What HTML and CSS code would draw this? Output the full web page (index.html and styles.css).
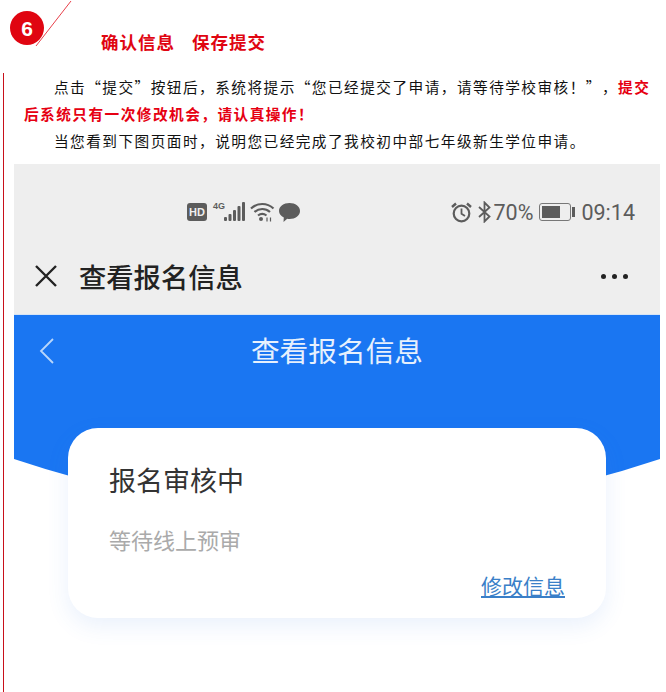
FILE: index.html
```html
<!DOCTYPE html>
<html lang="zh-CN">
<head>
    <meta charset="UTF-8">
    <meta name="viewport" content="width=device-width, initial-scale=1.0">
    <title>确认信息 保存提交</title>
    <link rel="stylesheet" href="styles.css">
</head>
<body>
    <header class="step-head">
        <div class="step-num">6</div>
        <svg class="step-slash" width="80" height="50" viewBox="0 0 80 50"><path d="M71 1 36 46" stroke="#e8404a" stroke-width="1" fill="none"/></svg>
        <h2 class="step-title">确认信息<span class="step-title-2">保存提交</span></h2>
    </header>

    <section class="step-body">
        <p class="para">点击“提交”按钮后，系统将提示“您已经提交了申请，请等待学校审核！”，<strong>提交后系统只有一次修改机会，请认真操作！</strong></p>
        <p class="para">当您看到下图页面时，说明您已经完成了我校初中部七年级新生学位申请。</p>

        <div class="phone">
            <div class="status-bar">
                <div class="status-group">
                    <span class="hd-badge">HD</span>
                    <span class="net-label">4G</span>
                    <svg class="signal" width="21" height="20" viewBox="0 0 21 20" fill="#5c5c5c">
                        <rect x="0" y="15" width="3" height="4" rx="1"/>
                        <rect x="4.5" y="12" width="3" height="7" rx="1"/>
                        <rect x="9" y="8" width="3" height="11" rx="1"/>
                        <rect x="13.5" y="4" width="3" height="15" rx="1"/>
                        <rect x="18" y="0" width="3" height="19" rx="1"/>
                    </svg>
                    <svg class="wifi" width="25" height="20" viewBox="0 0 25 20" fill="none" stroke="#5c5c5c" stroke-width="2.200">
                        <path d="M1 6.500C7.500 .5 17 .5 23.500 6.500"/>
                        <path d="M4.500 10C9 6 15.500 6 20 10"/>
                        <path d="M8 13.500C10.500 11.500 14 11.500 16.500 13.500"/>
                        <circle cx="11" cy="17" r="2" fill="#5c5c5c" stroke="none"/>
                        <path d="M17 15.500v4M20.500 15.500v4" stroke-width="1.200"/>
                    </svg>
                    <svg class="bubble" width="21" height="19" viewBox="0 0 21 19" fill="#5c5c5c">
                        <path d="M10.500 0C16.300 0 21 3.500 21 8s-4.700 8-10.500 8c-.8 0-1.600-.1-2.300-.2L4.500 19l.3-4.500C2 13 0 10.700 0 8 0 3.500 4.700 0 10.500 0Z"/>
                    </svg>
                </div>
                <div class="status-group">
                    <svg class="alarm" width="21" height="21" viewBox="0 0 21 21" fill="none" stroke="#5c5c5c" stroke-width="2.200">
                        <circle cx="10.500" cy="11.500" r="7.800"/>
                        <path d="M10.500 6.500v5.200l3.500 2.300" stroke-width="1.800"/>
                        <path d="M1 5 5 1.500M20 5 16 1.500" stroke-width="2.400"/>
                    </svg>
                    <svg class="bluetooth" width="13" height="22" viewBox="0 0 13 22" fill="none" stroke="#5c5c5c" stroke-width="1.800">
                        <path d="M1 6 11.500 15.500 6.500 20.500V1.500L11.500 6.500 1 16"/>
                    </svg>
                    <span class="battery-pct">70%</span>
                    <div class="battery"><div class="battery-level"></div></div>
                    <span class="battery-cap"></span>
                    <span class="clock">09:14</span>
                </div>
            </div>
            <div class="title-bar">
                <svg class="close-icon" width="24" height="24" viewBox="0 0 24 24" fill="none" stroke="#222" stroke-width="2.400"><path d="M2 2 22 22M22 2 2 22"/></svg>
                <span class="title-text">查看报名信息</span>
                <div class="more-dots"><i></i><i></i><i></i></div>
            </div>

            <div class="hero">
                <svg class="back-icon" width="15" height="26" viewBox="0 0 15 26" fill="none" stroke="#b9d6fb" stroke-width="1.800"><path d="M14 1 2 13 14 25"/></svg>
                <span class="hero-title">查看报名信息</span>
            </div>

            <div class="card">
                <div class="card-title">报名审核中</div>
                <div class="card-sub">等待线上预审</div>
                <a class="card-link">修改信息</a>
            </div>
        </div>
    </section>
</body>
</html>
```

FILE: styles.css
```css
* {
    margin: 0;
    padding: 0;
    box-sizing: border-box;
}

body {
    font-family: "Noto Sans CJK SC", "Liberation Sans", sans-serif;
    background: #fff;
    color: #111;
    height: 692px;
    overflow: hidden;
}

.step-head {
    position: relative;
    display: flex;
    height: 73px;
    padding-left: 10px;
}

.step-num {
    width: 34px;
    height: 34px;
    margin-top: 11px;
    border-radius: 50%;
    background: #e00511;
    color: #fff;
    font-family: "Liberation Sans", sans-serif;
    font-size: 21px;
    font-weight: bold;
    line-height: 35px;
    text-align: center;
}

.step-slash {
    position: absolute;
    top: 0;
    left: 0;
}

.step-title {
    margin: 30px 0 0 57px;
    color: #e00511;
    font-size: 17.5px;
    font-weight: bold;
    letter-spacing: 1px;
    line-height: 24px;
}

.step-title-2 {
    margin-left: 17px;
}

.step-body {
    margin-left: 3px;
    padding-left: 10px;
    border-left: 1px solid #c8101a;
}

.para {
    padding: 0 0 0 10px;
    margin-right: 6px;
    font-size: 14.67px;
    letter-spacing: 1.46px;
    line-height: 27px;
    text-indent: 30px;
    text-spacing-trim: space-all;
}

.para strong {
    color: #e60012;
}

.phone {
    width: 646px;
    height: 528px;
    margin-top: 10px;
}

.status-bar {
    display: flex;
    justify-content: space-between;
    align-items: center;
    height: 80px;
    padding: 16px 25px 0 173px;
    background: #eeeeee;
    color: #5c5c5c;
}

.status-group {
    display: flex;
    align-items: center;
}

.hd-badge {
    width: 20px;
    height: 18px;
    border-radius: 3px;
    background: #5c5c5c;
    color: #eee;
    font-family: "Liberation Sans", sans-serif;
    font-size: 11px;
    font-weight: bold;
    line-height: 18px;
    text-align: center;
}

.net-label {
    align-self: flex-start;
    width: 13px;
    margin: -1px -2px 0 6px;
    font-family: "Liberation Sans", sans-serif;
    font-size: 9px;
    font-weight: bold;
    line-height: 10px;
}

.wifi {
    margin-left: 5px;
}

.bubble {
    margin-left: 4px;
}

.bluetooth {
    margin-left: 6px;
}

.battery-pct {
    margin-left: 3px;
    font-family: Roboto, sans-serif;
    font-size: 21.5px;
}

.battery {
    width: 32px;
    height: 18px;
    margin-left: 6px;
    padding: 2px 10px 2px 2px;
    border: 1px solid #777;
    border-radius: 3px;
}

.battery-level {
    height: 100%;
    background: #5c5c5c;
}

.battery-cap {
    width: 3px;
    height: 10px;
    margin-left: 1px;
    background: #5c5c5c;
}

.clock {
    margin-left: 6px;
    font-family: Roboto, sans-serif;
    font-size: 21.5px;
}

.title-bar {
    display: flex;
    align-items: center;
    height: 71px;
    padding: 0 32px 6px 20px;
    background: #eeeeee;
    border-bottom: 1px solid #d6e4f5;
}

.title-text {
    margin-left: 21px;
    color: #222;
    font-size: 27.3px;
    font-weight: 500;
}

.more-dots {
    display: flex;
    gap: 6px;
    margin-left: auto;
}

.more-dots i {
    width: 5px;
    height: 5px;
    border-radius: 50%;
    background: #222;
}

.hero {
    display: flex;
    justify-content: center;
    height: 198px;
    padding-top: 14px;
    position: relative;
    background: #1a76f2;
    clip-path: path("M0 0H646V144Q323 252 0 144Z");
}

.hero-title {
    color: #e6f0fd;
    font-size: 28.7px;
    line-height: 42px;
}

.back-icon {
    position: absolute;
    top: 23px;
    left: 25px;
}

.card {
    position: relative;
    display: flex;
    flex-direction: column;
    width: 538px;
    height: 190px;
    margin: -85px 0 0 54px;
    padding: 32px 41px 0;
    border-radius: 30px;
    background: #fff;
    box-shadow: 0 8px 22px rgba(60, 130, 230, .11);
}

.card-title {
    color: #333;
    font-size: 27px;
    line-height: 40px;
}

.card-sub {
    margin-top: 23px;
    color: #aaa;
    font-size: 22px;
    line-height: 32px;
}

.card-link {
    align-self: flex-end;
    margin-top: 15px;
    color: #3a7fc8;
    font-size: 21px;
    line-height: 30px;
    text-decoration: underline;
}
```
